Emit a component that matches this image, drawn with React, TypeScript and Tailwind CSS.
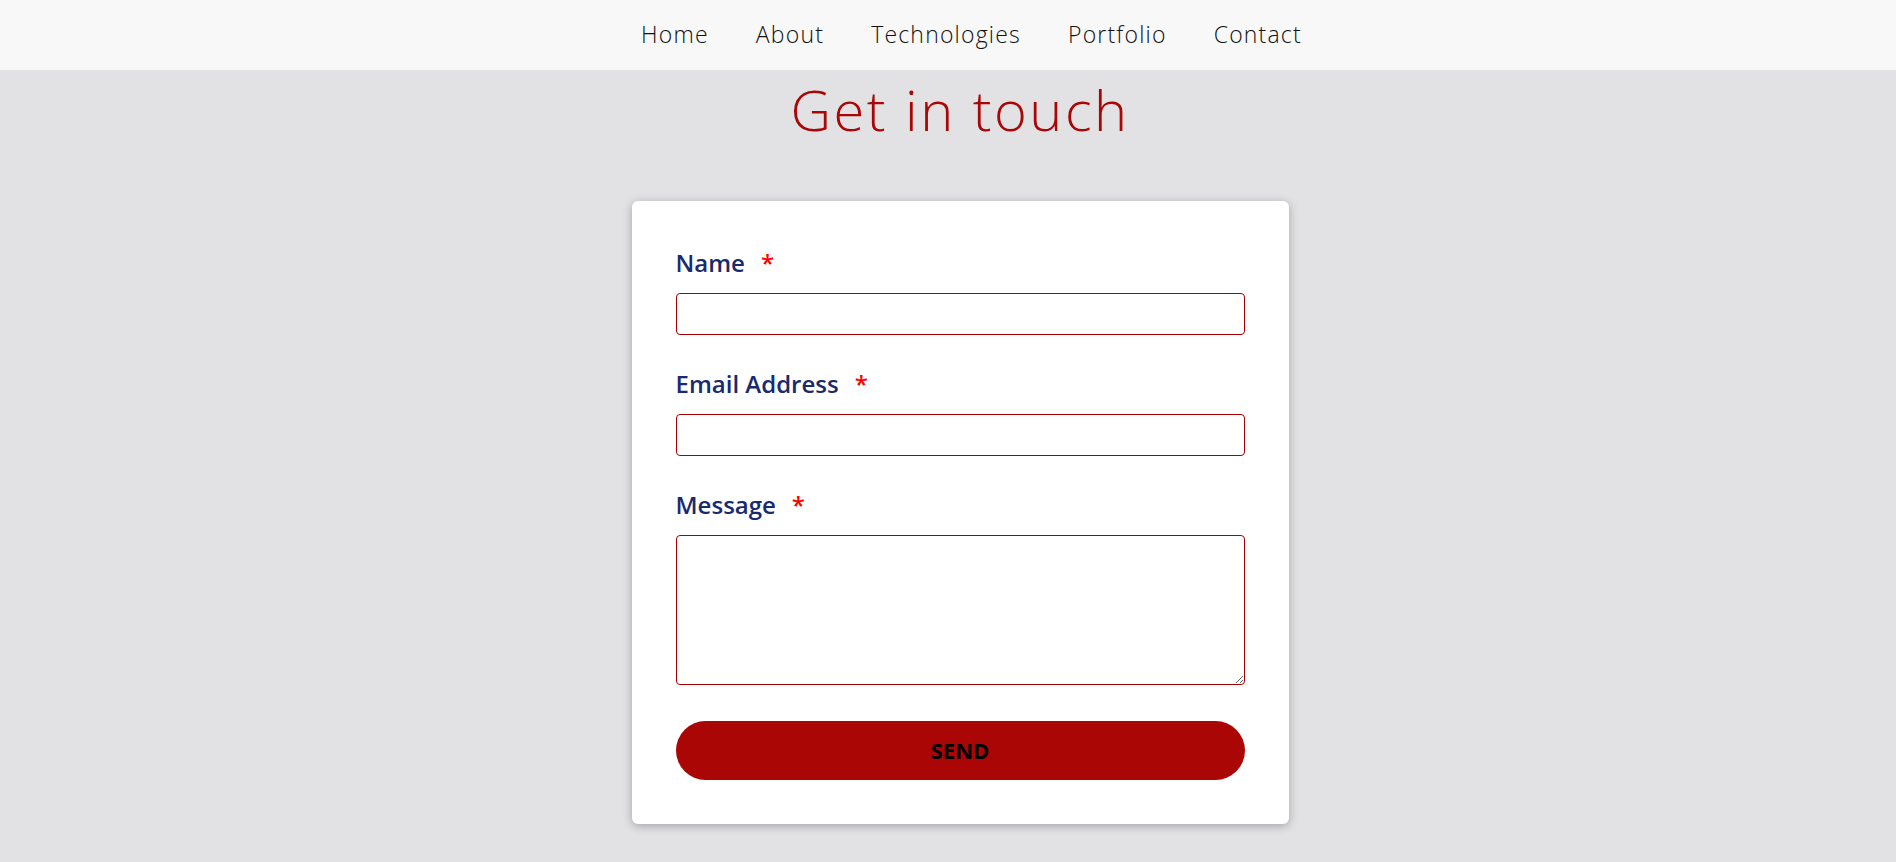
import React from 'react';

const navLinks = ['Home', 'About', 'Technologies', 'Portfolio', 'Contact'];

const fields = [
  { id: 'name', label: 'Name', type: 'text' },
  { id: 'email', label: 'Email Address', type: 'email' },
];

const App = () => {
  return (
    <div className="min-h-screen bg-[#e2e2e4]" style={{ fontFamily: '"Open Sans", sans-serif' }}>
      {/* Nav */}
      <nav className="h-[70px] bg-[#f8f8f8]">
        <ul className="h-full flex items-center justify-center gap-[47px] pl-[47px] pb-[2px]">
          {navLinks.map((link) => (
            <li key={link}>
              <a href="#" className="text-[23px] font-light text-[#111] tracking-[1.2px]">
                {link}
              </a>
            </li>
          ))}
        </ul>
      </nav>

      <main className="pl-6 flex flex-col items-center">
        <h1 className="mt-[6px] mb-[58px] text-[56px] leading-[67px] font-light tracking-[2.5px] text-[#a90606]">
          Get in touch
        </h1>

        {/* Contact card */}
        <form className="w-[657px] bg-white rounded-[6px] p-[44px] shadow-[0_2px_10px_rgba(0,0,0,0.28)]">
          {fields.map((field) => (
            <div key={field.id} className="mb-[31px]">
              <label htmlFor={field.id} className="block mb-3 text-[24px] leading-9 font-semibold text-[#1a2a6e]">
                {field.label}
                <span className="ml-4 text-[#ff0000]">*</span>
              </label>
              <input
                id={field.id}
                type={field.type}
                className="block w-full h-[42px] px-3 border border-[#a50000] rounded-[4px] bg-white outline-none"
              />
            </div>
          ))}

          <div>
            <label htmlFor="message" className="block mb-3 text-[24px] leading-9 font-semibold text-[#1a2a6e]">
              Message
              <span className="ml-4 text-[#ff0000]">*</span>
            </label>
            <textarea
              id="message"
              className="block w-full h-[150px] px-3 py-2 border border-[#a50000] rounded-[4px] bg-white outline-none"
            />
          </div>

          <button
            type="button"
            className="mt-9 w-full h-[59px] rounded-full bg-[#aa0606] text-black text-[22px] font-bold"
          >
            SEND
          </button>
        </form>
      </main>
    </div>
  );
};

export default App;
